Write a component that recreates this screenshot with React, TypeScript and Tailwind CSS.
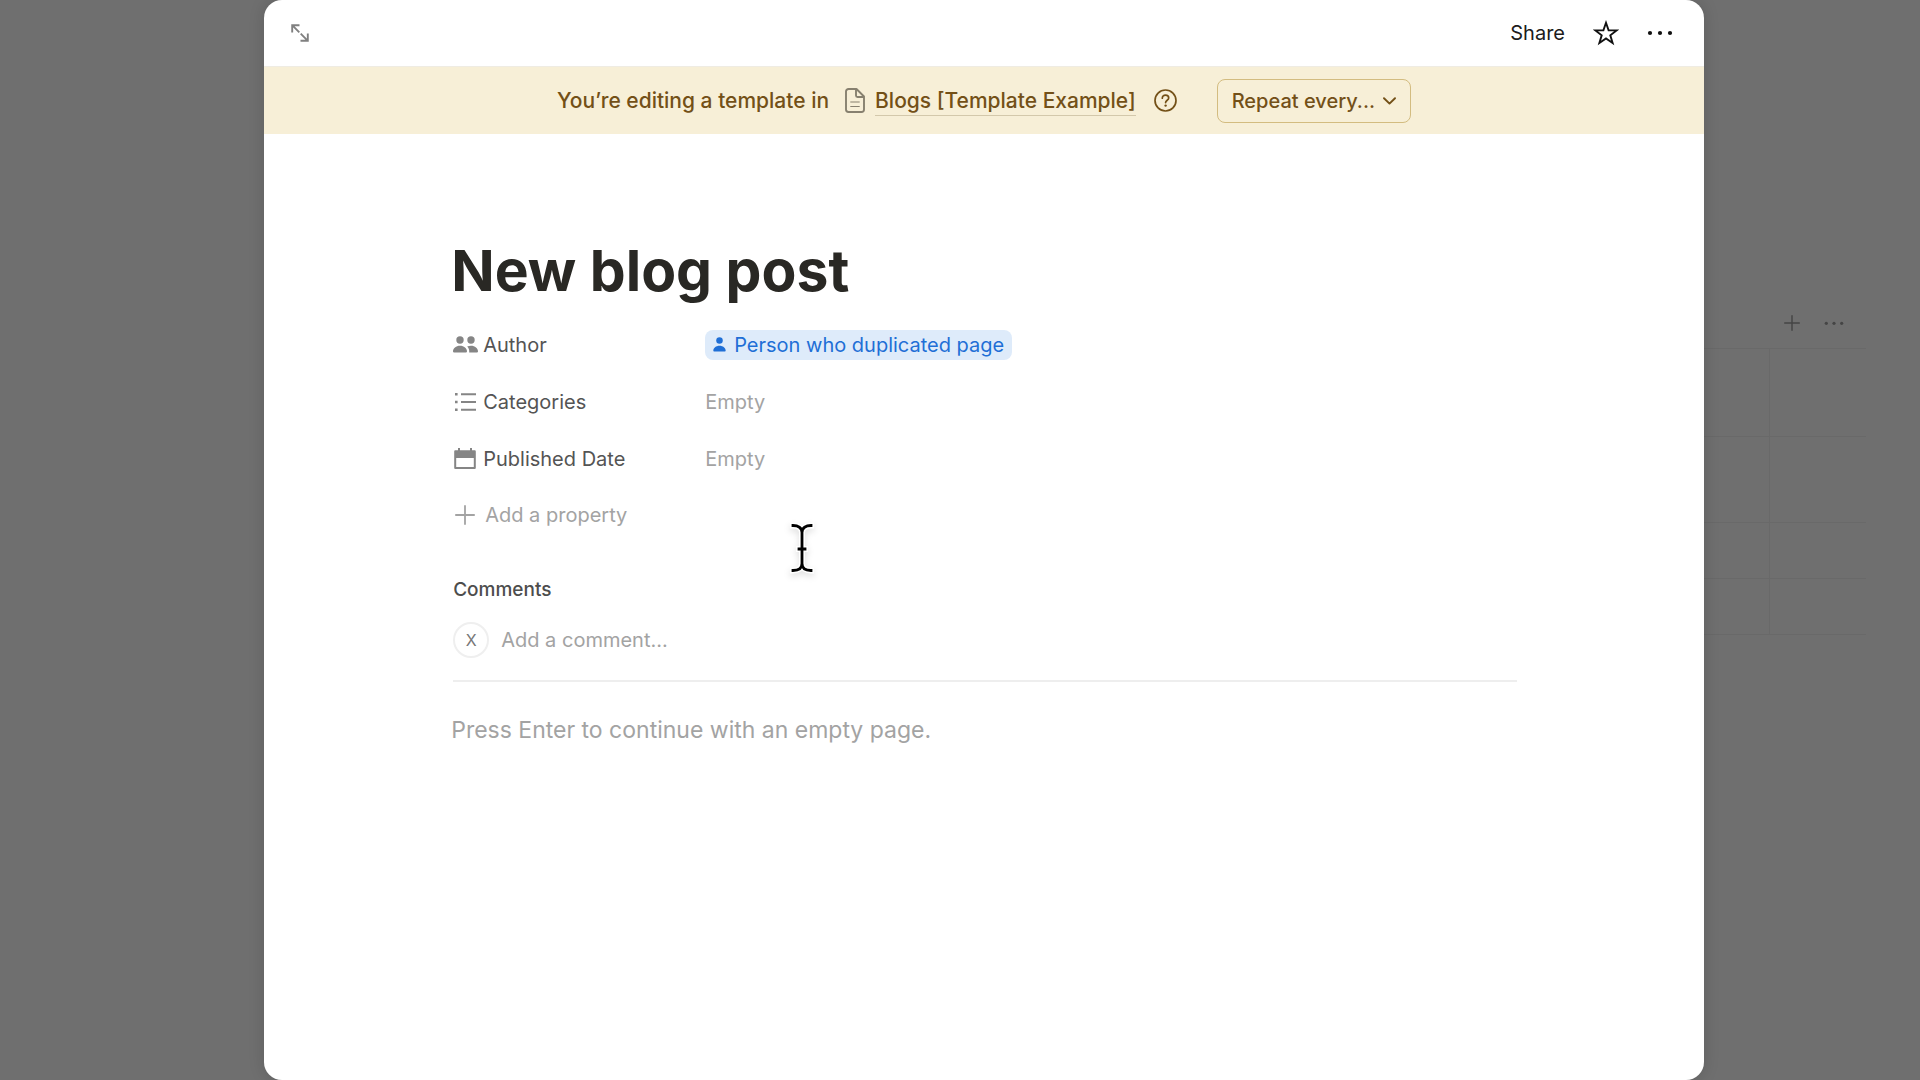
import type { ReactNode } from "react";

const tableRows = [
  { id: 1, height: "h-22" },
  { id: 2, height: "h-[86px]" },
  { id: 3, height: "h-14" },
  { id: 4, height: "h-14" },
];

function Dots({ className }: { className: string }) {
  return (
    <svg viewBox="0 0 26 6" fill="currentColor" aria-hidden className={className}>
      <circle cx="3" cy="3" r="2.1" />
      <circle cx="13" cy="3" r="2.1" />
      <circle cx="23" cy="3" r="2.1" />
    </svg>
  );
}

function PersonShape() {
  return (
    <g>
      <circle cx="7" cy="4" r="3.7" />
      <path d="M0 15.600c0-3.400 3-5.800 7-5.800s7 2.400 7 5.800c0 .5-.3.800-.8.800H.8c-.5 0-.8-.3-.8-.8z" />
    </g>
  );
}

function PeopleIcon() {
  return (
    <svg width="25" height="17" viewBox="0 0 25 17" fill="currentColor" aria-hidden>
      <PersonShape />
      <circle cx="18" cy="4" r="3.7" />
      <path d="M14.200 10.500c1.100-.5 2.400-.7 3.800-.7 4 0 7 2.400 7 5.800 0 .5-.3.800-.8.800h-8c.3-2.300-.4-4.300-2-5.900z" />
    </svg>
  );
}

function ListIcon() {
  return (
    <svg width="21" height="18" viewBox="0 0 21 18" fill="currentColor" aria-hidden>
      <path d="M0 0h2.600v2.600H0zM0 7.700h2.600v2.600H0zM0 15.400h2.600V18H0zM6 .3h15v2H6zM6 8h15v2H6zM6 15.700h15v2H6z" />
    </svg>
  );
}

function CalendarIcon() {
  return (
    <svg width="22" height="22" viewBox="0 0 22 22" fill="currentColor" aria-hidden>
      <path
        fillRule="evenodd"
        d="M4 0h2v2.200h10V0h2v2.200h2.500c.8 0 1.300.5 1.300 1.300v16.200c0 .8-.5 1.300-1.300 1.300h-19c-.8 0-1.300-.5-1.300-1.300V3.500c0-.8.5-1.300 1.300-1.300H4zM2.200 10v9h17.600v-9z"
      />
    </svg>
  );
}

function PlusIcon({ className }: { className: string }) {
  return (
    <svg
      viewBox="0 0 20 20"
      fill="none"
      stroke="currentColor"
      strokeWidth="1.8"
      strokeLinecap="round"
      aria-hidden
      className={className}
    >
      <path d="M10 .9v18.200M.9 10h18.200" />
    </svg>
  );
}

function TopBar() {
  return (
    <header className="flex h-[66px] items-center justify-between pr-[31px] pl-[27px]">
      <button aria-label="Open as full page" className="text-[#808080]">
        <svg width="18" height="18" viewBox="0 0 18 18" fill="none" stroke="currentColor" strokeWidth="1.9">
          <path d="M1.200 8.500V1.200h7.300M1.200 1.200l7.100 7.100M9.700 9.700l7.100 7.100M9.500 16.800h7.300V9.500" />
        </svg>
      </button>
      <div className="flex items-center">
        <button className="text-xl text-[#1c1c1c]">Share</button>
        <button aria-label="Add to favorites" className="ml-7 text-[#111]">
          <svg width="26" height="26" viewBox="0 0 26 26" fill="none" stroke="currentColor" strokeWidth="1.9">
            <path d="M13 2.800l2.600 7.400 8 .2-6.300 4.900 2.300 7.700-6.600-4.500L6.400 23l2.300-7.700-6.300-4.900 8-.2z" />
          </svg>
        </button>
        <button aria-label="More actions" className="ml-7 text-[#111]">
          <Dots className="w-[26px]" />
        </button>
      </div>
    </header>
  );
}

function TemplateBanner() {
  return (
    <div className="flex h-[68px] items-center justify-center border-t border-[#efece3] bg-[#f7efd7] text-[21px] font-medium text-[#735017]">
      <span>You’re editing a template in</span>
      <svg
        width="20"
        height="25"
        viewBox="0 0 20 25"
        fill="none"
        stroke="#87806f"
        strokeWidth="1.9"
        strokeLinejoin="round"
        aria-hidden
        className="ml-4"
      >
        <path d="M3.500 1h8L19 8.500v13a2.500 2.500 0 0 1-2.500 2.500h-13A2.500 2.500 0 0 1 1 21.500v-18A2.500 2.500 0 0 1 3.500 1z" />
        <path d="M11 1v6.500c0 1 .5 1.500 1.500 1.500H19" />
        <path d="M5.300 14h9.400M5.300 18.500h9.400" strokeWidth="1.200" />
      </svg>
      <a href="#blogs" className="ml-2.5 border-y border-t-transparent border-b-[#d3c8ab] leading-7">
        Blogs [Template Example]
      </a>
      <button aria-label="Help" className="ml-[18px]">
        <svg width="23" height="23" viewBox="0 0 23 23" fill="none" stroke="currentColor" strokeWidth="1.7">
          <circle cx="11.500" cy="11.500" r="10.500" />
          <path
            d="M8.300 9.200c0-1.900 1.400-3 3.200-3s3.200 1.100 3.200 2.800c0 2.200-3.100 2.300-3.100 4.600"
            strokeLinecap="round"
          />
          <circle cx="11.600" cy="16.600" r="1.200" fill="currentColor" stroke="none" />
        </svg>
      </button>
      <button className="ml-10 flex h-11 items-center gap-2 rounded-lg border border-[#d3bc80] px-3.5 text-xl">
        Repeat every...
        <svg
          width="13"
          height="8"
          viewBox="0 0 13 8"
          fill="none"
          stroke="currentColor"
          strokeWidth="1.900"
          strokeLinecap="round"
          strokeLinejoin="round"
          aria-hidden
        >
          <path d="M1 1.200l5.500 5.400L12 1.200" />
        </svg>
      </button>
    </div>
  );
}

function Property({ icon, name, children }: { icon: ReactNode; name: string; children: ReactNode }) {
  return (
    <div className="flex h-[57px] items-center">
      <dt className="flex w-[254px] shrink-0 items-center gap-1 text-[#545454]">
        <span className="flex w-7 justify-center text-[#858585]">{icon}</span>
        {name}
      </dt>
      <dd className="text-[#a3a3a3]">{children}</dd>
    </div>
  );
}

function PageBody() {
  return (
    <main className="px-[13%] pt-[103px]">
      <h1 className="text-[57px] leading-[68px] font-bold text-[#292824]">New blog post</h1>
      <dl className="mt-[11px] text-xl">
        <Property icon={<PeopleIcon />} name="Author">
          <span className="flex h-[30px] items-center gap-2 rounded-lg bg-[#deebfa] px-2 text-[#1f6fd6]">
            <svg width="13" height="15" viewBox="0 0 14 17" fill="currentColor" aria-hidden>
              <PersonShape />
            </svg>
            Person who duplicated page
          </span>
        </Property>
        <Property icon={<ListIcon />} name="Categories">
          Empty
        </Property>
        <Property icon={<CalendarIcon />} name="Published Date">
          Empty
        </Property>
      </dl>
      <button className="flex h-14 items-center gap-2.5 pl-1 text-xl text-[#a3a3a3]">
        <PlusIcon className="w-5" />
        Add a property
      </button>

      <section className="ml-0.5 border-b-2 border-[#eeeeee] pb-[22px]">
        <h2 className="mt-[33px] text-[19px] leading-7 font-medium text-[#4d4d4d]">Comments</h2>
        <div className="mt-[18px] flex h-9 items-center gap-3">
          <span className="flex size-9 items-center justify-center rounded-full border-2 border-[#efefef] text-base text-[#777]">
            X
          </span>
          <input
            aria-label="Add a comment"
            placeholder="Add a comment..."
            className="min-w-0 flex-1 text-xl outline-none placeholder:text-[#a3a3a3]"
          />
        </div>
      </section>
      <p className="mt-8 text-[23px] leading-8 text-[#a3a3a3]">Press Enter to continue with an empty page.</p>
    </main>
  );
}

function TextCursor() {
  return (
    <svg
      width="36"
      height="60"
      viewBox="0 0 36 60"
      fill="none"
      aria-hidden
      className="pointer-events-none absolute top-[518px] left-[520px] drop-shadow-md"
    >
      <g strokeLinecap="square">
        <path
          d="M9 7.500c5 0 9 2 9 7v31c0 5-4 7-9 7M27 7.500c-5 0-9 2-9 7M18 45.500c0 5 4 7 9 7M15 31h6"
          stroke="#fff"
          strokeWidth="6"
        />
        <path
          d="M9 7.500c5 0 9 2 9 7v31c0 5-4 7-9 7M27 7.500c-5 0-9 2-9 7M18 45.500c0 5 4 7 9 7M15 31h6"
          stroke="#000"
          strokeWidth="2.800"
        />
      </g>
    </svg>
  );
}

function BackgroundTable() {
  return (
    <aside className="pt-[310px] pr-[54px] text-[#454545]">
      <div className="flex h-[38px] items-start justify-end gap-6 pr-[22px]">
        <button aria-label="Add column" className="flex h-[26px] items-center">
          <PlusIcon className="w-4" />
        </button>
        <button aria-label="Table options" className="flex h-[26px] items-center">
          <Dots className="w-5" />
        </button>
      </div>
      <table className="w-full border-collapse border-y border-[#696969]">
        <tbody>
          {tableRows.map((row) => (
            <tr key={row.id} className={`${row.height} border-b border-[#696969]`}>
              <td className="w-[65px] border-r border-[#696969]" />
              <td />
            </tr>
          ))}
        </tbody>
      </table>
    </aside>
  );
}

export default function App() {
  return (
    <div className="grid min-h-screen grid-cols-[11fr_60fr_9fr] bg-[#6f6f6f] font-['Inter','Liberation_Sans',sans-serif]">
      <div />
      <div className="relative rounded-[18px] bg-white shadow-[0_0_16px_rgba(0,0,0,0.15)]">
        <TopBar />
        <TemplateBanner />
        <PageBody />
        <TextCursor />
      </div>
      <BackgroundTable />
    </div>
  );
}
